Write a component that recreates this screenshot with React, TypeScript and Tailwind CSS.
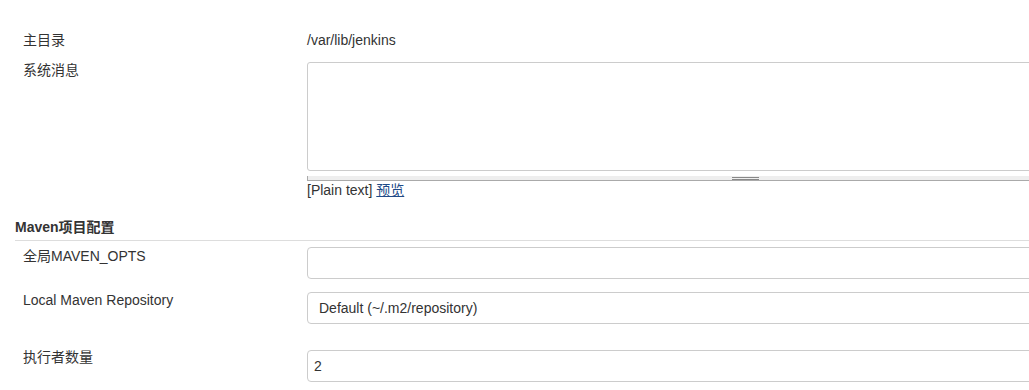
import React from 'react';

const Label: React.FC<{ children: React.ReactNode }> = ({ children }) => (
  <div className="w-[284px] ml-[23px] shrink-0 leading-[20px]">{children}</div>
);

export default function App() {
  return (
    <div className="w-[1029px] h-[390px] overflow-hidden bg-white text-[14px] text-[#333] font-['Liberation_Sans','Noto_Sans_CJK_SC',sans-serif]">
      <div className="w-[1200px]">
        {/* 主目录 */}
        <div className="flex mt-[30px]">
          <Label>主目录</Label>
          <div className="leading-[20px]">/var/lib/jenkins</div>
        </div>

        {/* 系统消息 */}
        <div className="flex mt-[10px]">
          <Label>系统消息</Label>
          <div className="w-[875px] pt-[2px]">
            <textarea className="block w-full h-[109px] border border-[#ccc] rounded-[3px] resize-none bg-white" />
            <div className="mt-[5px] h-[5px] bg-[#eee] border-b border-l border-[#aaa] flex flex-col items-center">
              <div className="w-[27px] h-px bg-[#888] mt-px" />
              <div className="w-[27px] h-px bg-[#888] mt-px" />
            </div>
            <div className="leading-[18px]">
              [Plain text] <a href="#" className="text-[#204a87] underline">预览</a>
            </div>
          </div>
        </div>

        {/* section header */}
        <div className="ml-[15px] mt-[18px] pb-[3px] border-b border-[#ddd] font-bold leading-[20px]">
          Maven项目配置
        </div>

        <div className="flex mt-[5px]">
          <Label>全局MAVEN_OPTS</Label>
          <input className="mt-[1px] w-[875px] h-[32px] border border-[#ccc] rounded-[4px] px-[6px] bg-white" />
        </div>

        <div className="flex mt-[11px]">
          <Label>Local Maven Repository</Label>
          <select
            className="mt-[2px] w-[875px] h-[32px] border border-[#ccc] rounded-[4px] pl-[11px] bg-white appearance-none"
            defaultValue="default"
          >
            <option value="default">Default (~/.m2/repository)</option>
          </select>
        </div>

        <div className="flex mt-[23px]">
          <Label>执行者数量</Label>
          <input
            className="mt-[3px] w-[875px] h-[32px] border border-[#ccc] rounded-[4px] px-[6px] bg-white"
            defaultValue="2"
          />
        </div>
      </div>
    </div>
  );
}
